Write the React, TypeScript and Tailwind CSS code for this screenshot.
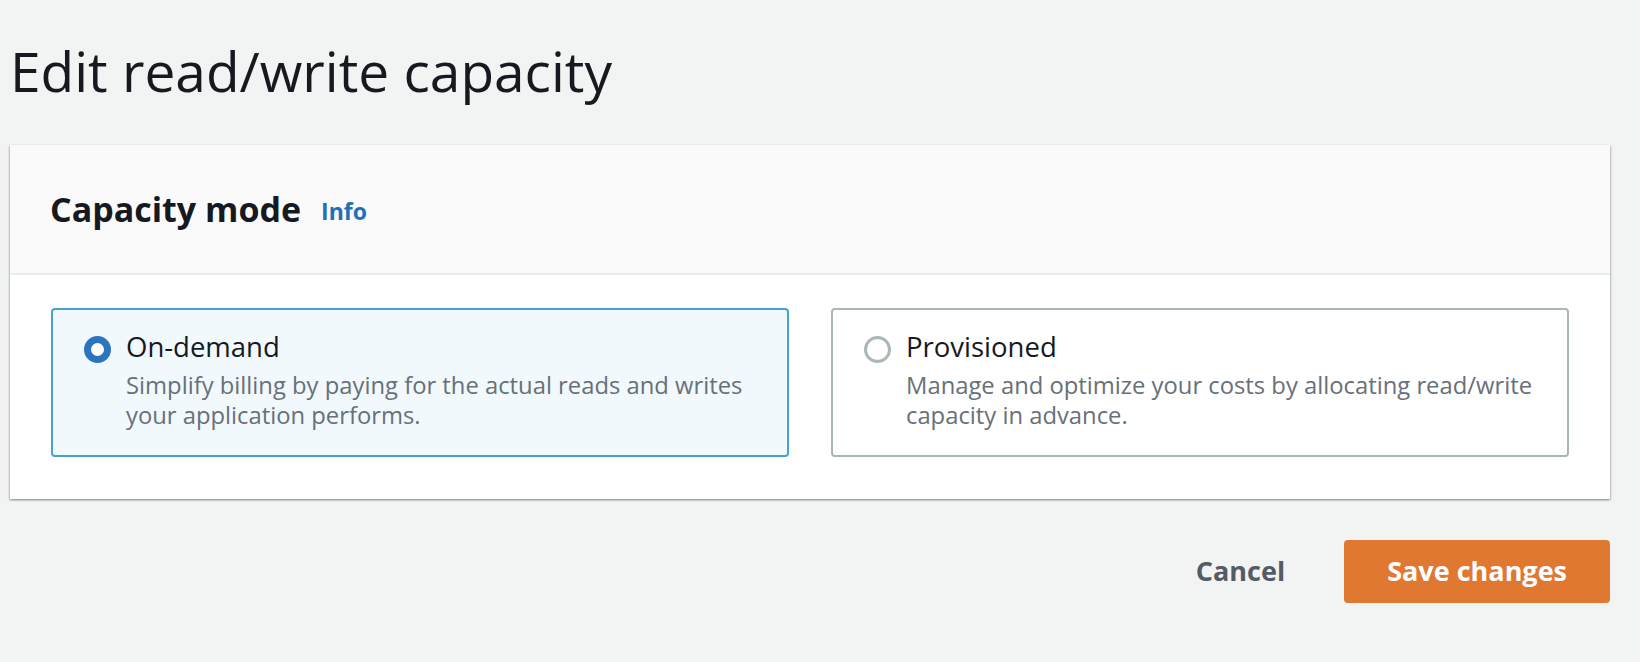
import React from "react";

function Radio({ checked }: { checked: boolean }) {
  return checked ? (
    <span className="-ml-[1px] mt-[9px] box-border block h-[27px] w-[27px] shrink-0 rounded-full border-[7px] border-[#2d74be] bg-white" />
  ) : (
    <span className="-ml-[1px] mt-[9px] box-border block h-[27px] w-[27px] shrink-0 rounded-full border-[3px] border-[#aab7b8] bg-white" />
  );
}

function Tile({
  checked,
  label,
  desc,
}: {
  checked: boolean;
  label: string;
  desc: React.ReactNode;
}) {
  return (
    <div
      className={
        checked
          ? "flex h-[149px] gap-[15px] rounded-[4px] border-2 border-[#44a4cd] bg-[#f1f9fd] pl-[32px] pr-[20px] pt-[17px]"
          : "flex h-[149px] gap-[15px] rounded-[4px] border-2 border-[#aab7b8] bg-white pl-[32px] pr-[20px] pt-[17px]"
      }
    >
      <Radio checked={checked} />
      <div>
        <div className="text-[27.5px] leading-[40px] text-[#16191f]">{label}</div>
        <div className="mt-[3px] text-[23.8px] leading-[30px] text-[#687078]">{desc}</div>
      </div>
    </div>
  );
}

export default function App() {
  return (
    <div
      className="min-h-[662px] bg-[#f2f3f3] pl-[10px] pr-[30px]"
      style={{ fontFamily: '"Open Sans", "Noto Sans", sans-serif' }}
    >
      <h1 className="pt-[34px] text-[55px] font-medium leading-[74px] text-[#16191f]">
        Edit read/write capacity
      </h1>
      <div className="mt-[37px] bg-white shadow-[0_1px_2px_0_rgba(0,28,36,0.3),1px_1px_2px_0_rgba(0,28,36,0.15),-1px_1px_2px_0_rgba(0,28,36,0.15)]">
        <div className="flex h-[130px] items-center border-b-2 border-[#eaeded] bg-[#fafafa] pl-[40px]">
          <h2 className="text-[34px] font-bold leading-[46px] text-[#16191f]">Capacity mode</h2>
          <a className="ml-[20px] mt-[4px] text-[23px] font-bold leading-[30px] text-[#1f70b8]">Info</a>
        </div>
        <div className="grid grid-cols-2 gap-[42px] px-[41px] pb-[42px] pt-[33px]">
          <Tile
            checked
            label="On-demand"
            desc={
              <>
                Simplify billing by paying for the actual reads and writes
                <br />
                your application performs.
              </>
            }
          />
          <Tile
            checked={false}
            label="Provisioned"
            desc={
              <>
                Manage and optimize your costs by allocating read/write
                <br />
                capacity in advance.
              </>
            }
          />
        </div>
      </div>
      <div className="mt-[41px] flex justify-end gap-[16px]">
        <button className="h-[63px] rounded-[4px] px-[43px] text-[27px] font-bold text-[#545b64]">
          Cancel
        </button>
        <button className="h-[63px] rounded-[4px] bg-[#e07832] px-[43px] text-[27px] font-bold text-white">
          Save changes
        </button>
      </div>
    </div>
  );
}
